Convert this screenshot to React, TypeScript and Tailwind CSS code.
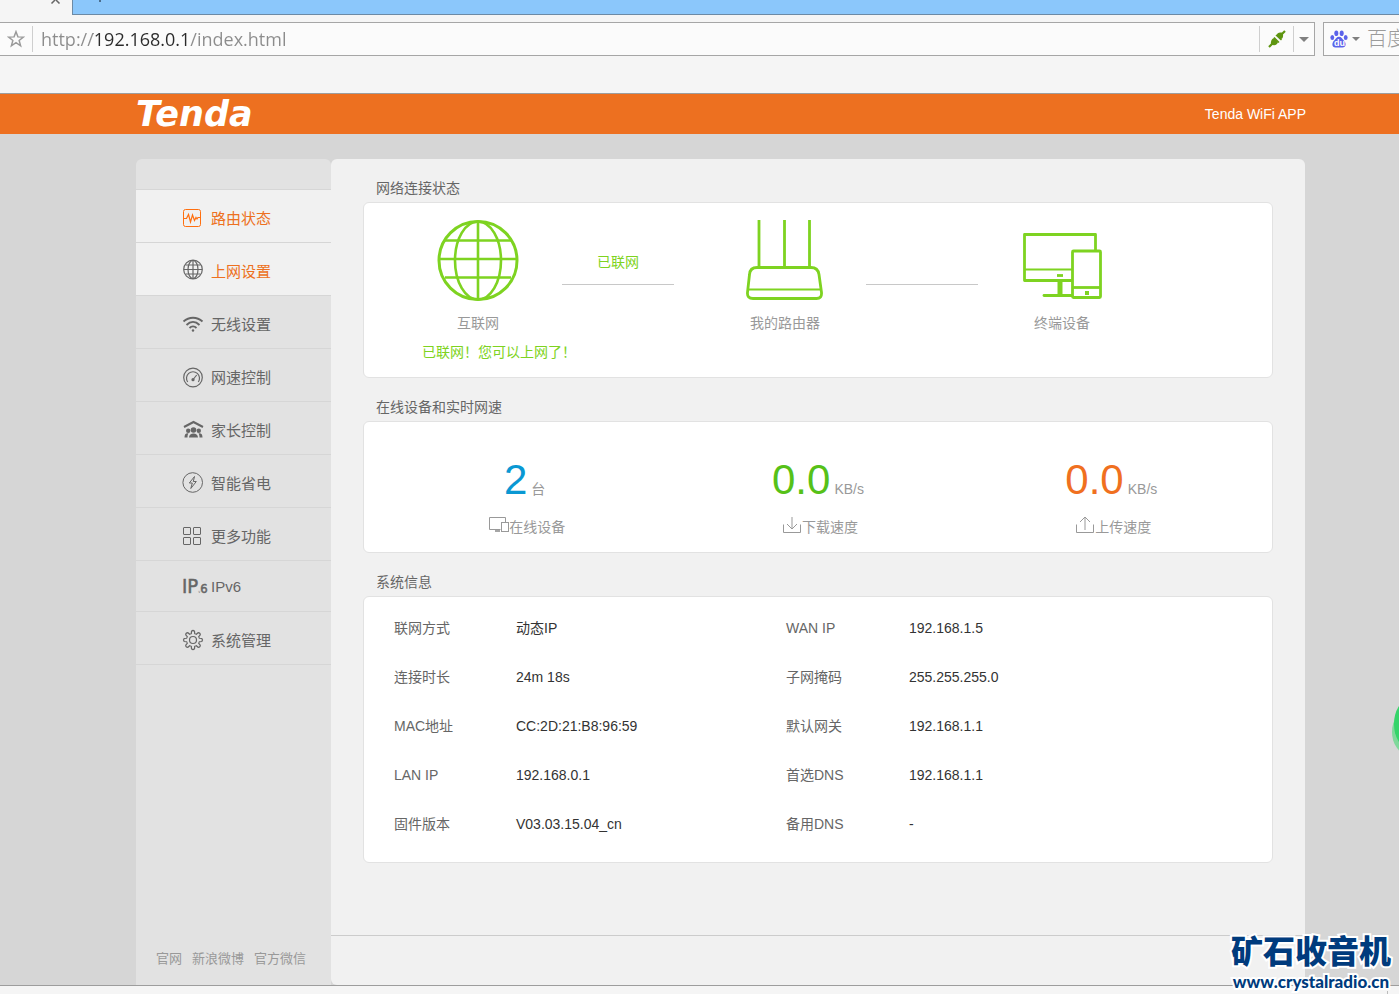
import React from 'react';

interface MenuItem {
  label: string;
  icon: React.ReactNode;
  active?: boolean;
  hovered?: boolean;
}

interface InfoRow {
  name: string;
  value: string;
  name2: string;
  value2: string;
}

const iconProps = {
  width: 20,
  height: 20,
  viewBox: '0 0 20 20',
  fill: 'none',
  stroke: 'currentColor',
  className: 'shrink-0 overflow-visible',
  'aria-hidden': true,
};

const gearTeeth = [0, 45, 90, 135, 180, 225, 270, 315];

const menu: MenuItem[] = [
  {
    label: '路由状态',
    active: true,
    icon: (
      <svg {...iconProps} stroke="#ff6f0f">
        <rect x="0.5" y="1.5" width="17" height="17" rx="2" />
        <path d="M1 10.5h2.5L5.5 6.5l2 7.500 2-7 2 5.500 1.500-3 1 1.500 1-1.500h2.500" strokeWidth="1.2" />
      </svg>
    ),
  },
  {
    label: '上网设置',
    hovered: true,
    icon: (
      <svg {...iconProps} stroke="#666" strokeWidth="1.2">
        <circle cx="10" cy="8.5" r="9.3" />
        <ellipse cx="10" cy="8.5" rx="5" ry="9" />
        <path d="M10 -.5v18M1 8.500h18M2.500 4h15M2.500 13h15" />
      </svg>
    ),
  },
  {
    label: '无线设置',
    icon: (
      <svg {...iconProps} strokeWidth="1.8">
        <path d="M0.500 7.500c5.500-5 13.500-5 19 0" />
        <path d="M3.500 11c4-4 9-4 13 0M6.500 14c2-2 5-2 7 0" />
        <circle cx="10" cy="16.5" r="1.2" fill="currentColor" stroke="none" />
      </svg>
    ),
  },
  {
    label: '网速控制',
    icon: (
      <svg {...iconProps} strokeWidth="1.2">
        <circle cx="10" cy="10.5" r="9.3" />
        <path d="M4.700 15a6.500 6.500 0 1 1 10.600 0" />
        <path d="M10.500 12l3.200-4" />
        <circle cx="10" cy="12.7" r="1.6" fill="currentColor" stroke="none" />
      </svg>
    ),
  },
  {
    label: '家长控制',
    icon: (
      <svg {...iconProps}>
        <path d="M1 7l9.500-5 9.500 5" strokeWidth="2" />
        <g fill="currentColor" stroke="none">
          <circle cx="10.5" cy="10" r="2.8" />
          <circle cx="5.2" cy="10.8" r="2.2" />
          <circle cx="15.8" cy="10.8" r="2.2" />
          <path d="M6 17.500c0-5.500 9-5.500 9 0zM1.500 17.500c0-3 1-4.500 4-4.300-.6 1-1 2-1 4.300zM19.500 17.500c0-3-1-4.500-4-4.300.6 1 1 2 1 4.300z" />
        </g>
      </svg>
    ),
  },
  {
    label: '智能省电',
    icon: (
      <svg {...iconProps}>
        <circle cx="9.7" cy="9.5" r="9.8" />
        <path d="M11.500 3.500L6.300 10h3l-1.500 5.500 5.500-7h-3z" />
      </svg>
    ),
  },
  {
    label: '更多功能',
    icon: (
      <svg {...iconProps}>
        <rect x="0.5" y="1.5" width="7" height="7" rx="0.5" />
        <rect x="10.5" y="1.5" width="7" height="7" rx="0.5" />
        <rect x="0.5" y="11.5" width="7" height="7" rx="0.5" />
        <rect x="10.5" y="11.5" width="7" height="7" rx="0.5" />
      </svg>
    ),
  },
  {
    label: 'IPv6',
    icon: (
      <svg {...iconProps} fill="currentColor" strokeWidth="0.5">
        <text x="-1" y="17" fontFamily="DejaVu Sans Condensed, DejaVu Sans, sans-serif">
          <tspan fontSize="20">IP</tspan>
          <tspan fontSize="4" stroke="none">v</tspan>
          <tspan fontSize="13">6</tspan>
        </text>
      </svg>
    ),
  },
  {
    label: '系统管理',
    icon: (
      <svg {...iconProps} strokeWidth="1.2">
        <circle cx="10" cy="10" r="3.5" />
        {gearTeeth.map((deg) => (
          <path
            key={deg}
            transform={`rotate(${deg} 10 10)`}
            d="M7.500 4l.8-.4.200-2.400q1.500-1.400 3 0l.2 2.400.8.4"
          />
        ))}
      </svg>
    ),
  },
];

const systemInfo: InfoRow[] = [
  { name: '联网方式', value: '动态IP', name2: 'WAN IP', value2: '192.168.1.5' },
  { name: '连接时长', value: '24m 18s', name2: '子网掩码', value2: '255.255.255.0' },
  { name: 'MAC地址', value: 'CC:2D:21:B8:96:59', name2: '默认网关', value2: '192.168.1.1' },
  { name: 'LAN IP', value: '192.168.0.1', name2: '首选DNS', value2: '192.168.1.1' },
  { name: '固件版本', value: 'V03.03.15.04_cn', name2: '备用DNS', value2: '-' },
];

const Caret: React.FC = () => (
  <svg width="10" height="5" viewBox="0 0 10 5" fill="#808080" aria-hidden="true">
    <path d="M0 0h10L5 5z" />
  </svg>
);

const BrowserBar: React.FC = () => (
  <div className="border-b border-[#9d9d9d] bg-[#f5f5f5] pb-[37px]">
    {/* Tab strip */}
    <div className="flex h-[15px]">
      <div className="flex w-[72px] justify-end pr-[11px]">
        <svg width="11" height="4" viewBox="0 0 11 4" fill="none" stroke="#666" strokeWidth="1.5" aria-hidden="true">
          <path d="M1.500 3.500L5 0M9.500 3.500L6 0" />
        </svg>
      </div>
      <div className="flex-1 border-b border-l border-[#6c8aa5] bg-[#8bc7fb] pl-[26px]">
        <div className="h-[2px] w-[2px] bg-[#4b6e8e]"></div>
      </div>
    </div>

    {/* Address bar */}
    <div className="mt-[7px] flex h-[34px]">
      <div className="mr-2 flex flex-1 items-center border-y border-r border-[#a6a6a6] bg-[#fbfbfb]">
        <button type="button" aria-label="收藏" className="flex w-8 justify-center">
          <svg width="18" height="18" viewBox="0 0 16 16" fill="none" stroke="#9a9a9a" strokeWidth="1.3" aria-hidden="true">
            <path d="M8 1.500l1.700 4.600 4.900.2-3.800 3 1.300 4.700L8 11.300 3.900 14l1.300-4.700-3.800-3 4.900-.2z" />
          </svg>
        </button>
        <input
          type="text"
          aria-label="地址"
          defaultValue="http://192.168.0.1/index.html"
          className="h-[26px] min-w-0 flex-1 border-x border-[#cfcfcf] bg-[linear-gradient(to_right,#8c8c8c_60px,#2a2a2a_60px,#2a2a2a_156px,#8c8c8c_156px)] bg-clip-text pl-2 font-['Open_Sans','Noto_Sans',sans-serif] text-[18px] text-transparent outline-none"
        />
        <button type="button" aria-label="兼容模式" className="flex w-[33px] justify-center">
          <svg width="18" height="18" viewBox="0 0 18 18" fill="#5e9510" stroke="#5e9510" aria-hidden="true">
            <path d="M1 17l4-4M13 5l4-4" strokeWidth="2.2" fill="none" />
            <path d="M3 14.500c-.5-3 .5-6 3.500-6.500l3.500 4c-.5 3-3.500 4-7 2.500z" stroke="none" />
            <path d="M8.500 5.500c.5-2.500 3-3.500 6-2.500 1.500 3.500 0 6-2.500 6.500z" stroke="none" />
            <path d="M6 7.500l5 5M8 5l5.500 5" strokeWidth="1.5" />
          </svg>
        </button>
        <button type="button" aria-label="历史记录" className="flex h-[26px] w-[21px] items-center justify-center border-l border-[#cfcfcf]">
          <Caret />
        </button>
      </div>
      <div className="flex w-[76px] items-center border-y border-l border-[#a6a6a6] bg-[#fbfbfb] pl-[6px]">
        <button type="button" aria-label="搜索引擎" className="mr-[7px] flex items-center gap-1">
          <svg width="18" height="18" viewBox="0 0 18 18" fill="#5b63ea" aria-hidden="true">
            <ellipse cx="6.3" cy="3.3" rx="2" ry="2.8" />
            <ellipse cx="11.7" cy="3.3" rx="2" ry="2.8" />
            <ellipse cx="2.3" cy="7.5" rx="1.9" ry="2.6" />
            <ellipse cx="15.7" cy="7.5" rx="1.9" ry="2.6" />
            <path d="M9 6.800c2.500 0 3 2.200 5 3.900 2.300 2 2.300 6.800-1.500 6.800h-7c-3.800 0-3.800-4.800-1.500-6.800 2-1.700 2.500-3.900 5-3.900z" />
            <text x="4" y="16" fontSize="9" fontWeight="700" fill="#fff">du</text>
          </svg>
          <svg width="8" height="4" viewBox="0 0 8 4" fill="#808080" aria-hidden="true">
            <path d="M0 0h8L4 4z" />
          </svg>
        </button>
        <input
          type="text"
          aria-label="搜索"
          placeholder="百度"
          className="w-0 min-w-0 flex-1 text-[20px] font-light outline-none placeholder:text-[#9b9b9b]"
        />
      </div>
    </div>
  </div>
);

const Sidebar: React.FC = () => (
  <aside className="flex w-[195px] shrink-0 flex-col rounded-t-md bg-[#e2e2e2]">
    <nav className="mt-[30px] border-t border-[#d6d6d6]">
      {menu.map((item) => (
        <a
          key={item.label}
          href="#"
          className={`flex items-center gap-2 border-b border-[#d6d6d6] pl-[47px] text-[15px] ${
            item.label === 'IPv6' ? 'h-[51px]' : 'h-[53px] pt-1'
          } ${item.active || item.hovered ? 'bg-[#f1f1f1] text-[#ed7020]' : 'text-[#666]'}`}
        >
          {item.icon}
          <span className="pt-[2px]">{item.label}</span>
        </a>
      ))}
    </nav>
    <div className="mt-auto flex gap-[10px] pb-4 pl-5 text-[13px] leading-5 text-[#999]">
      <a href="#">官网</a>
      <a href="#">新浪微博</a>
      <a href="#">官方微信</a>
    </div>
  </aside>
);

const Panel: React.FC<{ title: string; children: React.ReactNode }> = ({ title, children }) => (
  <section>
    <h2 className="pt-[19px] pb-1 pl-[13px] text-sm text-[#666]">{title}</h2>
    <div className="rounded-md border border-[#e2e2e2] bg-white">{children}</div>
  </section>
);

const GlobeIcon: React.FC = () => (
  <svg width="82" height="82" viewBox="0 0 82 82" fill="none" stroke="#7ed321" strokeWidth="2.6" aria-hidden="true">
    <circle cx="41" cy="41.5" r="39" strokeWidth="3" />
    <ellipse cx="41" cy="41.5" rx="23" ry="39" />
    <path d="M41 2v78M2 40h78" />
    <path d="M8 21.500h66M8 58.500h66" />
  </svg>
);

const RouterIcon: React.FC = () => (
  <svg width="78" height="82" viewBox="0 0 78 82" fill="none" stroke="#7ed321" strokeWidth="2.8" aria-hidden="true">
    <path d="M13 1v48M38.500 1v48M63.500 1v48" />
    <path d="M11 48.500h54q7 0 8 7l2.500 18q.500 6-5 6H7q-6 0-5.500-6L3.500 55.500q.500-7 7.500-7z" />
    <path d="M3 70.500h72" strokeWidth="2" />
  </svg>
);

const DevicesIcon: React.FC = () => (
  <svg width="80" height="82" viewBox="0 0 80 82" fill="none" stroke="#7ed321" strokeWidth="2.8" className="overflow-visible" aria-hidden="true">
    <path d="M50 61.500H2.500v-46h71V31" strokeLinejoin="round" />
    <path d="M2.500 50.500H50" strokeWidth="2" />
    <path d="M22 76.500h28" strokeLinecap="round" />
    <path d="M38 62v14" strokeWidth="5" />
    <path d="M35 56.500h6" />
    <rect x="50.5" y="32" width="28" height="46.5" rx="1" />
    <path d="M50.500 68.500h28" />
    <path d="M63 74h4" strokeWidth="4" />
  </svg>
);

const ConnectionPanel: React.FC = () => (
  <Panel title="网络连接状态">
    <div className="flex pt-4 pl-[30px] text-sm">
      <div className="flex w-[168px] flex-col items-center">
        <GlobeIcon />
        <p className="mt-[10px] leading-6 text-[#999]">互联网</p>
      </div>
      <p className="h-[66px] w-[112px] border-b border-[#c8c8c8] pt-[31px] text-center leading-6 text-[#7ed321]">已联网</p>
      <div className="ml-[30px] flex w-[162px] flex-col items-center">
        <RouterIcon />
        <p className="mt-[10px] leading-6 text-[#999]">我的路由器</p>
      </div>
      <div className="h-[66px] w-[112px] border-b border-[#c8c8c8]"></div>
      <div className="flex w-[168px] flex-col items-center">
        <DevicesIcon />
        <p className="mt-[10px] leading-6 text-[#999]">终端设备</p>
      </div>
    </div>
    <p className="mt-[5px] pb-[13px] pl-[58px] text-sm leading-6 text-[#7ed321]">已联网！您可以上网了！</p>
  </Panel>
);

interface StatProps {
  value: string;
  unit: string;
  label: string;
  color: string;
  icon: React.ReactNode;
}

const Stat: React.FC<StatProps> = ({ value, unit, label, color, icon }) => (
  <div className="flex flex-1 flex-col items-center text-sm text-[#999]">
    <div className="flex items-baseline gap-1">
      <span className={`text-[42px] leading-[48px] ${color}`}>{value}</span>
      <span>{unit}</span>
    </div>
    <div className="mt-[13px] flex items-center pl-[5px]">
      {icon}
      <span>{label}</span>
    </div>
  </div>
);

const SpeedPanel: React.FC = () => (
  <Panel title="在线设备和实时网速">
    <div className="flex px-[14px] pt-[34px] pb-[15px]">
      <Stat
        value="2"
        unit="台"
        label="在线设备"
        color="text-[#0a98d3]"
        icon={
          <svg width="20" height="20" viewBox="0 0 20 20" fill="none" stroke="#999" aria-hidden="true">
            <path d="M11.500 12.500H.5v-12h16v5" />
            <path d="M6 14h5" stroke="#888" strokeWidth="1.5" />
            <rect x="12.5" y="5.5" width="7" height="9" />
          </svg>
        }
      />
      <Stat
        value="0.0"
        unit="KB/s"
        label="下载速度"
        color="text-[#56c118]"
        icon={
          <svg width="19" height="20" viewBox="0 0 19 20" fill="none" stroke="#999" aria-hidden="true">
            <path d="M.5 7.500v8h17v-8" />
            <path d="M9 0v12M4 7l5 5 5-5" />
          </svg>
        }
      />
      <Stat
        value="0.0"
        unit="KB/s"
        label="上传速度"
        color="text-[#f0701f]"
        icon={
          <svg width="19" height="20" viewBox="0 0 19 20" fill="none" stroke="#999" aria-hidden="true">
            <path d="M.5 7.500v8h17v-8" />
            <path d="M9 13V0M4 5l5-5 5 5" />
          </svg>
        }
      />
    </div>
  </Panel>
);

const SystemPanel: React.FC = () => (
  <Panel title="系统信息">
    <div className="pt-[6px] pb-[14px] pl-[30px]">
      <table className="w-full table-fixed text-left text-sm">
        <tbody>
          {systemInfo.map((row) => (
            <tr key={row.name} className="h-[49px]">
              <th scope="row" className="w-[122px] font-normal text-[#666]">{row.name}</th>
              <td className="w-[270px] text-[#333]">{row.value}</td>
              <th scope="row" className="w-[123px] font-normal text-[#666]">{row.name2}</th>
              <td className="text-[#333]">{row.value2}</td>
            </tr>
          ))}
        </tbody>
      </table>
    </div>
  </Panel>
);

const App: React.FC = () => {
  return (
    <div className="relative flex min-h-screen flex-col overflow-hidden bg-[#d6d6d6] font-['Liberation_Sans','Noto_Sans_CJK_SC',sans-serif]">
      <BrowserBar />

      <header className="flex h-10 items-center justify-between bg-[#ed7020] pr-[93px] pl-[136px] text-white">
        <a
          href="#"
          className="font-['DejaVu_Sans',sans-serif] text-[35px] leading-[38px] font-bold italic"
        >
          Tenda
        </a>
        <a href="#" className="text-sm">Tenda WiFi APP</a>
      </header>

      <div className="flex flex-1 pt-[25px] pr-[94px] pl-[136px]">
        <Sidebar />
        <main className="flex flex-1 flex-col rounded-md bg-[#f1f1f1]">
          <div className="flex-1 px-8 pb-8">
            <ConnectionPanel />
            <SpeedPanel />
            <SystemPanel />
          </div>
          <div className="h-[50px] border-t border-[#ccc]"></div>
        </main>
      </div>

      {/* Browser status bar */}
      <div className="flex h-[9px] items-end justify-end border-t border-[#9d9d9d] bg-[#f5f5f5] pr-[11px]">
        <div className="h-[3px] w-px bg-[#bbb]"></div>
      </div>

      {/* Floating ball at the window edge */}
      <svg className="absolute top-[704px] right-0" width="8" height="50" viewBox="0 0 8 50" aria-hidden="true">
        <ellipse cx="17" cy="28" rx="16" ry="22" fill="#7fd89b" />
        <ellipse cx="18" cy="20" rx="15" ry="24" fill="#35d46a" />
      </svg>

      {/* Site watermark */}
      <div className="absolute right-2 bottom-[2px] flex flex-col items-center text-[#003b7d] [paint-order:stroke_fill] [-webkit-text-stroke:4px_white]">
        <span className="font-['Noto_Sans_CJK_SC',sans-serif] text-[32px] leading-[46px] font-black">矿石收音机</span>
        <span className="font-['Lato',sans-serif] text-[17px] leading-5 font-black">www.crystalradio.cn</span>
      </div>
    </div>
  );
};

export default App;
